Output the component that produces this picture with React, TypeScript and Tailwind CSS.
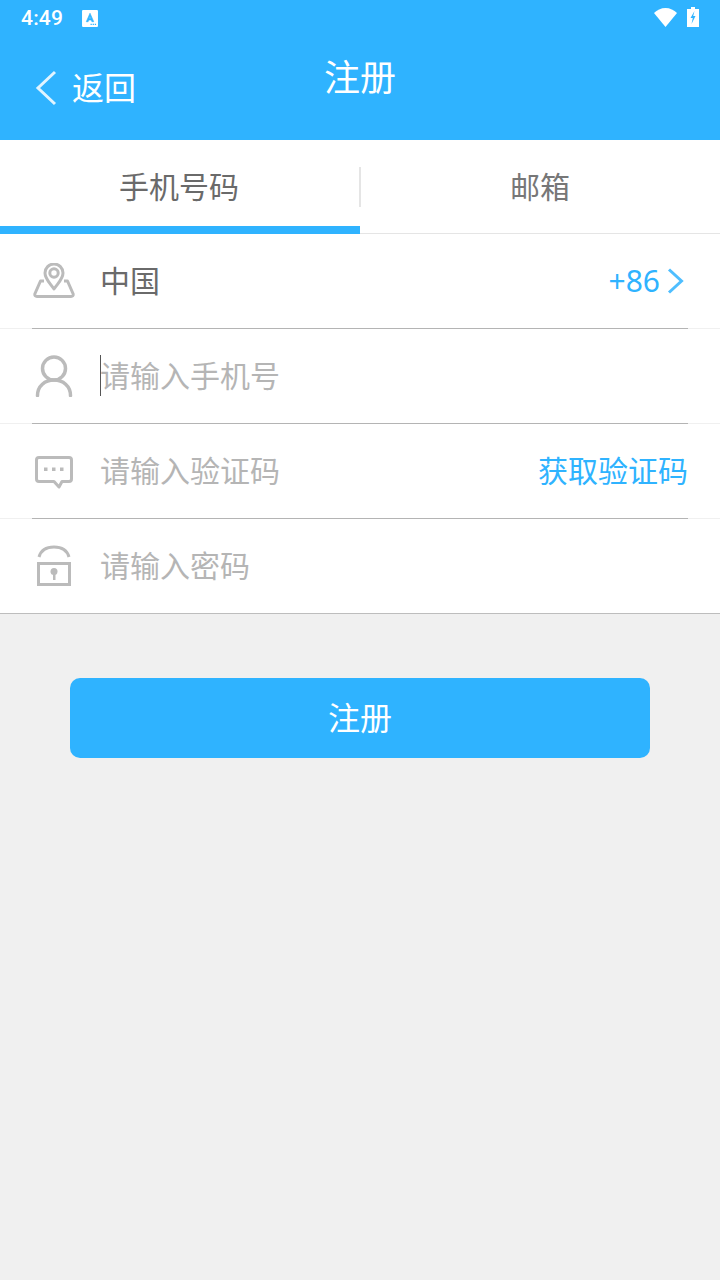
const FONT = "font-['Roboto','Noto_Sans_CJK_SC',sans-serif]";

function BackIcon() {
  return (
    <svg width="24" height="36" viewBox="0 0 24 36" fill="none">
      <path d="M21 2 L4 18 L21 34" stroke="#fff" strokeWidth="3" strokeOpacity="0.85" />
    </svg>
  );
}

function MapIcon() {
  return (
    <svg width="42" height="36" viewBox="0 0 42 36" fill="none" stroke="#bbb" strokeWidth="3" strokeLinejoin="round">
      <path d="M21 26 C17 20 12 16 12 10 A9 9 0 0 1 30 10 C30 16 25 20 21 26 Z" />
      <circle cx="21" cy="10" r="4.200" />
      <path d="M11 18 H7.500 L1.800 31 Q1.500 33.500 4 33.500 H38 Q40.500 33.500 40.200 31 L34.500 18 H31" />
    </svg>
  );
}

function UserIcon() {
  return (
    <svg width="38" height="42" viewBox="0 0 38 42" fill="none" stroke="#bbb" strokeWidth="3.500">
      <circle cx="19" cy="13.500" r="11.500" />
      <path d="M2.500 40.500 C2.500 31 10 25 19 25 C28 25 35.500 31 35.500 40.500" strokeLinecap="round" />
    </svg>
  );
}

function ChatIcon() {
  return (
    <svg className="mt-[3px]" width="38" height="34" viewBox="0 0 38 34" fill="none">
      <path d="M4 1.500 H34 Q36.500 1.500 36.500 4 V23 Q36.500 25.500 34 25.500 H27 L24 31 L19 25.500 H4 Q1.500 25.500 1.500 23 V4 Q1.500 1.500 4 1.500 Z" stroke="#bbb" strokeWidth="3" strokeLinejoin="round" />
      <rect x="9" y="11.500" width="3.500" height="3.500" fill="#bbb" />
      <rect x="17" y="11.500" width="3.500" height="3.500" fill="#bbb" />
      <rect x="25" y="11.500" width="3.500" height="3.500" fill="#bbb" />
    </svg>
  );
}

function LockIcon() {
  return (
    <svg width="36" height="42" viewBox="0 0 36 42" fill="none">
      <path d="M3 12 C5 5 11 2 18 2 C25 2 31 5 33 12" stroke="#bbb" strokeWidth="3" />
      <rect x="2.500" y="18.500" width="31" height="21" stroke="#bbb" strokeWidth="3" />
      <circle cx="18" cy="26.500" r="3.500" fill="#bbb" />
      <rect x="17" y="27" width="2.500" height="8" fill="#bbb" />
    </svg>
  );
}

function Row({ icon, children, last }: { icon: React.ReactNode; children: React.ReactNode; last?: boolean }) {
  return (
    <div className={last ? "h-[95px] bg-white border-b border-[#bdbdbd]" : "h-[95px] bg-white border-b border-[#f0f0f0] relative"}>
      <div className="flex h-full items-center pl-[32px] pr-[32px]">
        <div className="w-[44px] flex items-center justify-center">{icon}</div>
        <div className="flex-1 flex items-center ml-[24px]">{children}</div>
      </div>
      {!last && <div className="absolute left-[32px] right-[32px] bottom-[-1px] h-px bg-[#b4b4b4]" />}
    </div>
  );
}

export default function App() {
  return (
    <div className={`w-[720px] h-[1280px] bg-[#f0f0f0] ${FONT}`}>
      <header className="h-[140px] bg-[#2fb3ff] text-white relative">
        <div className="h-[37px] flex items-center pl-[21px] pr-[21px]">
          <span className="text-[21px] font-medium font-['Roboto',sans-serif] tracking-[0.2px]">4:49</span>
          <svg className="ml-[19px]" width="16" height="17" viewBox="0 0 15 16">
            <path d="M0 1 Q0 0 1 0 H14 Q15 0 15 1 V15 Q15 16 14 16 H1 Q0 16 0 15 Z" fill="#fff" />
            <path d="M7.500 3 L11 11 H9.300 L8.700 9.400 H6.300 L5.700 11 H4 Z M7.500 5.800 L6.800 8 H8.200 Z" fill="#2fb3ff" strokeWidth="0.600" stroke="#2fb3ff" />
            <path d="M8 13 h1.200 v1.200 h-1.200 Z M10 13 h1.200 v1.200 h-1.200 Z M12 13 h1.200 v1.200 h-1.200 Z" fill="#2fb3ff" />
          </svg>
          <div className="flex-1" />
          <svg className="-translate-y-px" width="23" height="19" viewBox="0 0 23 19">
            <path d="M0 5 C3 2 7 0 11.500 0 C16 0 20 2 23 5 L11.500 19 Z" fill="#fff" />
          </svg>
          <svg className="ml-[10px] -translate-y-[2px]" width="12" height="20" viewBox="0 0 12 20">
            <path d="M4 0 H8 V2 H12 V20 H0 V2 H4 Z" fill="#fff" />
            <path d="M7.500 4 L3.500 11 H5.800 L4.500 17 L8.500 9 H6.200 Z" fill="#2fb3ff" />
          </svg>
        </div>
        <div className="absolute left-[34px] top-[70px]"><BackIcon /></div>
        <span className="absolute left-[72px] top-[66px] text-[32px] leading-[46px]">返回</span>
        <h1 className="absolute left-0 right-0 top-[56px] text-center text-[36px] leading-[46px] font-normal">注册</h1>
      </header>

      <div className="h-[94px] bg-white flex">
        <div className="flex-1 flex flex-col">
          <div className="flex-1 flex items-center justify-center pt-[8px] pr-[2px] text-[30px] text-[#6a6a6a]">手机号码</div>
          <div className="h-[8px] bg-[#2fb3ff]" />
        </div>
        <div className="flex-1 relative border-b border-[#e5e5e5] flex items-center justify-center pt-[1px] text-[30px] text-[#777]">
          <div className="absolute left-[-1px] top-[27px] w-[2px] h-[40px] bg-[#e5e5e5]" />
          邮箱
        </div>
      </div>

      <Row icon={<MapIcon />}>
        <span className="text-[30px] text-[#6a6a6a]">中国</span>
        <span className="ml-auto text-[30px] text-[#2fb3ff] font-['Noto_Sans',sans-serif] leading-none">+86</span>
        <svg className="ml-[7px] mr-[4px]" width="17" height="26" viewBox="0 0 17 26" fill="none">
          <path d="M2 1.500 L14.500 13 L2 24.500" stroke="#2fb3ff" strokeWidth="3" strokeOpacity="0.85" />
        </svg>
      </Row>
      <Row icon={<UserIcon />}>
        <span className="w-px h-[41px] bg-[#555] -translate-y-px" />
        <span className="text-[30px] text-[#b5b5b5] -ml-px">请输入手机号</span>
      </Row>
      <Row icon={<ChatIcon />}>
        <span className="text-[30px] text-[#b5b5b5]">请输入验证码</span>
        <span className="ml-auto text-[30px] text-[#2fb3ff]">获取验证码</span>
      </Row>
      <Row icon={<LockIcon />} last>
        <span className="text-[30px] text-[#b5b5b5]">请输入密码</span>
      </Row>

      <div className="px-[70px] pt-[64px]">
        <button className="w-full h-[80px] pt-[1px] rounded-[10px] bg-[#2fb3ff] text-white text-[32px]">注册</button>
      </div>
    </div>
  );
}
